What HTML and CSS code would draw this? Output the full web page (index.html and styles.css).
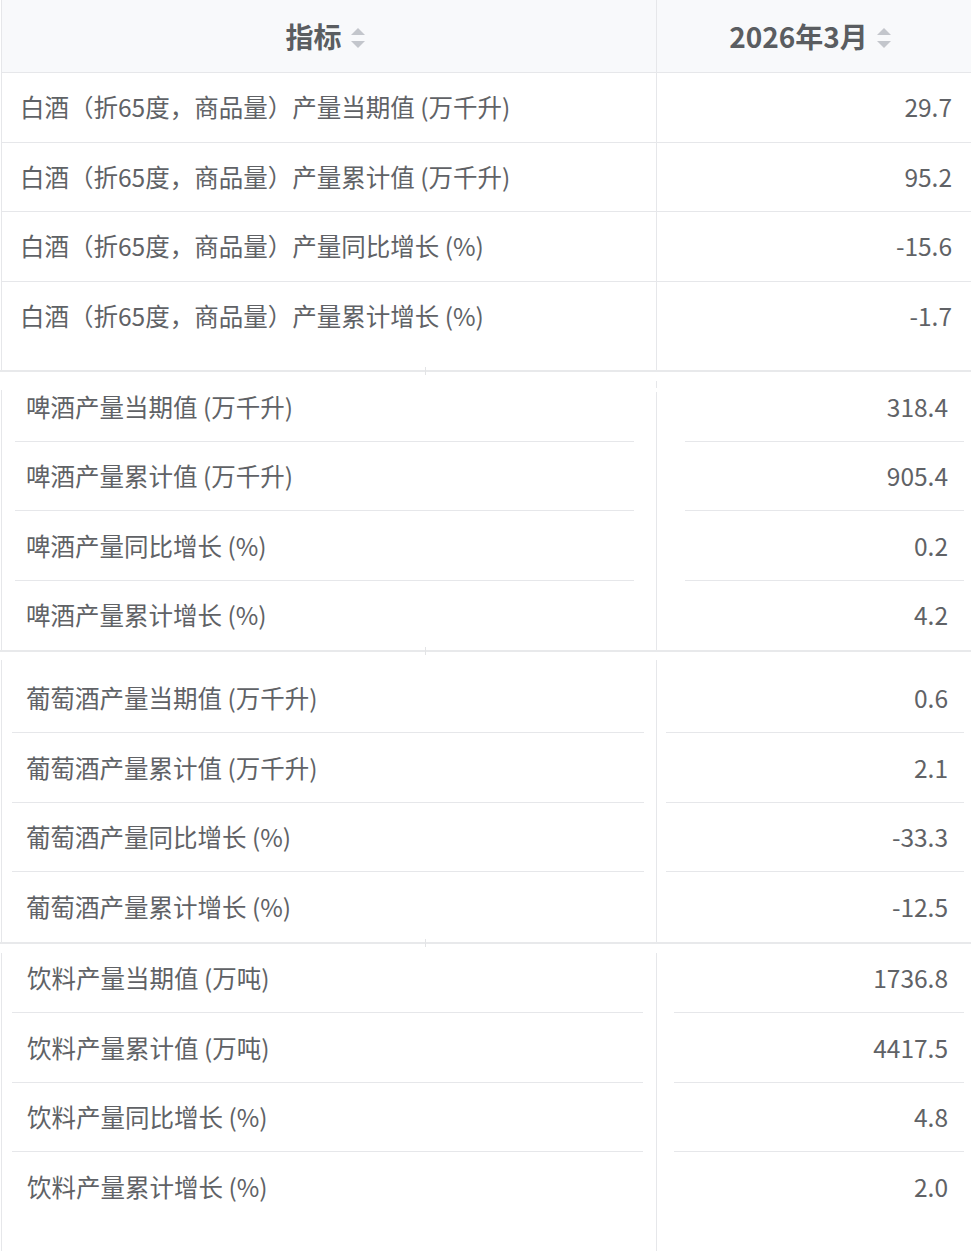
FILE: index.html
```html
<!DOCTYPE html>
<html lang="zh-CN">
<head>
<meta charset="utf-8">
<title>酒、饮料产量</title>
<link rel="stylesheet" href="styles.css">
</head>
<body>
<div class="table">
  <div class="thead">
    <div class="th th-name"><span>指标</span><svg class="sort" viewBox="0 0 16 22" width="16" height="22"><path d="M8 1 L15 8 L1 8 Z"/><path d="M1 14 L15 14 L8 21 Z"/></svg></div>
    <div class="th th-val"><span>2026年3月</span><svg class="sort" viewBox="0 0 16 22" width="16" height="22"><path d="M8 1 L15 8 L1 8 Z"/><path d="M1 14 L15 14 L8 21 Z"/></svg></div>
  </div>

  <div class="group g1">
    <div class="row"><div class="cell name">白酒（折65度，商品量）产量当期值 (万千升)</div><div class="cell val">29.7</div></div>
    <div class="row"><div class="cell name">白酒（折65度，商品量）产量累计值 (万千升)</div><div class="cell val">95.2</div></div>
    <div class="row"><div class="cell name">白酒（折65度，商品量）产量同比增长 (%)</div><div class="cell val">-15.6</div></div>
    <div class="row last"><div class="cell name">白酒（折65度，商品量）产量累计增长 (%)</div><div class="cell val">-1.7</div></div>
  </div>
  <div class="sep"></div>

  <div class="group g2">
    <div class="row"><div class="cell name">啤酒产量当期值 (万千升)</div><div class="cell val">318.4</div></div>
    <div class="row"><div class="cell name">啤酒产量累计值 (万千升)</div><div class="cell val">905.4</div></div>
    <div class="row"><div class="cell name">啤酒产量同比增长 (%)</div><div class="cell val">0.2</div></div>
    <div class="row last"><div class="cell name">啤酒产量累计增长 (%)</div><div class="cell val">4.2</div></div>
  </div>
  <div class="sep"></div>

  <div class="group g3">
    <div class="row first"><div class="cell name">葡萄酒产量当期值 (万千升)</div><div class="cell val">0.6</div></div>
    <div class="row"><div class="cell name">葡萄酒产量累计值 (万千升)</div><div class="cell val">2.1</div></div>
    <div class="row"><div class="cell name">葡萄酒产量同比增长 (%)</div><div class="cell val">-33.3</div></div>
    <div class="row last"><div class="cell name">葡萄酒产量累计增长 (%)</div><div class="cell val">-12.5</div></div>
  </div>
  <div class="sep"></div>

  <div class="group g4">
    <div class="row"><div class="cell name">饮料产量当期值 (万吨)</div><div class="cell val">1736.8</div></div>
    <div class="row"><div class="cell name">饮料产量累计值 (万吨)</div><div class="cell val">4417.5</div></div>
    <div class="row"><div class="cell name">饮料产量同比增长 (%)</div><div class="cell val">4.8</div></div>
    <div class="row last"><div class="cell name">饮料产量累计增长 (%)</div><div class="cell val">2.0</div></div>
  </div>
</div>
</body>
</html>
```

FILE: styles.css
```css
:root {
  --line: #e6e7ea;
}

html, body {
  margin: 0;
  padding: 0;
  background: #ffffff;
  overflow: hidden;
}

body {
  font-family: "Noto Sans CJK SC", "Noto Sans", sans-serif;
  color: #606266;
}

.table {
  margin-left: 1px;
  width: 970px;
}

/* header */
.thead {
  display: grid;
  grid-template-columns: 656px 1fr;
  height: 73px;
  box-sizing: border-box;
  border-bottom: 1px solid var(--line);
  background: #f8f9fb;
}

.th {
  display: flex;
  align-items: center;
  justify-content: center;
  gap: 8px;
  padding-right: 7px;
  font-size: 28px;
  font-weight: 700;
  color: #5a5d61;
}

.th-name {
  border-left: 1px solid var(--line);
  border-right: 1px solid var(--line);
}

.sort {
  fill: #c3c6cc;
  margin-top: 3px;
}

/* groups */
.group {
  background-image:
    linear-gradient(var(--line), var(--line)),
    linear-gradient(var(--line), var(--line));
  background-repeat: no-repeat;
  background-size: 1px 100%, 1px 100%;
  background-position: 0 0, 655px 0;
}

.row {
  display: grid;
  grid-template-columns: 656px 1fr;
  height: 69.5px;
  box-sizing: border-box;
}

.cell {
  display: flex;
  align-items: center;
  font-size: 24.5px;
  white-space: nowrap;
  background-repeat: no-repeat;
  padding-bottom: 1px;
}

.val {
  justify-content: flex-end;
}

/* group 1: full width rules */
.g1 .row {
  border-bottom: 1px solid var(--line);
}

.g1 .row.last {
  border-bottom: none;
  height: 88.5px;
  padding-bottom: 19px;
}

.g1 .name { padding-left: 19px; }
.g1 .val { padding-right: 19px; }

/* group separator */
.sep {
  position: relative;
  height: 2px;
  margin-left: -1px;
  background: #e8e9eb;
}

.sep::after {
  content: "";
  position: absolute;
  left: 425px;
  top: -3px;
  width: 1px;
  height: 8px;
  background: #e3e4e6;
}

/* group 2 */
.g2 {
  background-image:
    linear-gradient(var(--line), var(--line)),
    linear-gradient(var(--line), var(--line)),
    linear-gradient(var(--line), var(--line));
  background-size: 1px 100%, 1px 100%, 1px 7px;
  background-position: 0 18px, 655px 20px, 655px 9px;
}

.g2 .name {
  padding-left: 25px;
  background-image: linear-gradient(var(--line), var(--line));
  background-size: 619px 1px;
  background-position: 14px 100%;
}

.g2 .val {
  padding-right: 23px;
  background-image: linear-gradient(var(--line), var(--line));
  background-size: 279px 1px;
  background-position: 28px 100%;
}

/* group 3 */
.g3 {
  background-position: 0 8px, 655px 8px;
}

.g3 .row.first {
  height: 81px;
  padding-top: 11.5px;
}

.g3 .name {
  padding-left: 25px;
  background-image: linear-gradient(var(--line), var(--line));
  background-size: 632px 1px;
  background-position: 11px 100%;
}

.g3 .val {
  padding-right: 23px;
  background-image: linear-gradient(var(--line), var(--line));
  background-size: 298px 1px;
  background-position: 9px 100%;
}

/* group 4 */
.g4 {
  background-position: 0 9px, 655px 9px;
}

.g4 .row.last {
  height: 99px;
  padding-bottom: 29.5px;
}

.g4 .name {
  padding-left: 26px;
  background-image: linear-gradient(var(--line), var(--line));
  background-size: 631px 1px;
  background-position: 11px 100%;
}

.g4 .val {
  padding-right: 23px;
  background-image: linear-gradient(var(--line), var(--line));
  background-size: 290px 1px;
  background-position: 17px 100%;
}

.group .row.last .cell {
  background-image: none;
}
```
